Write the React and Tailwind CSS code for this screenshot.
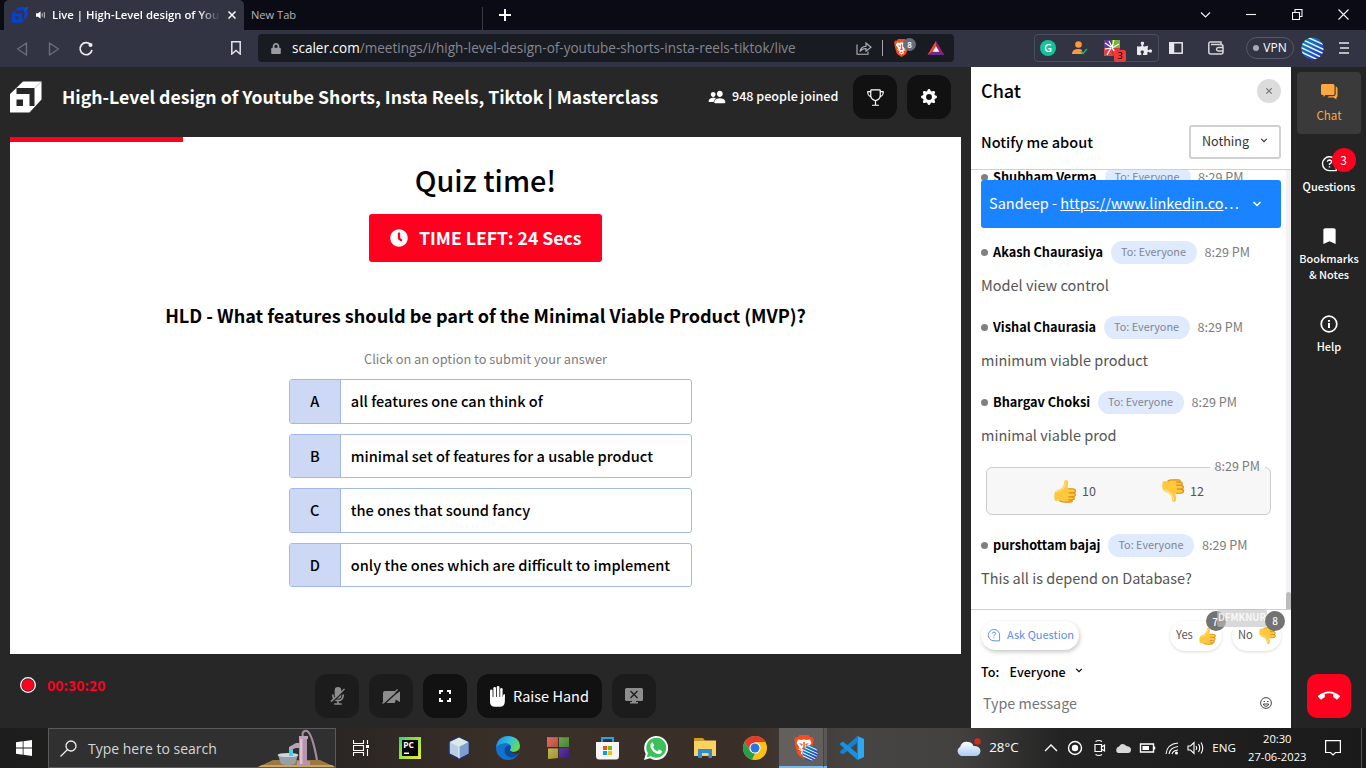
import React from "react";
import { IoPeople, IoTrophyOutline } from "react-icons/io5";
import { BsGearFill } from "react-icons/bs";
import { FaClock, FaPuzzlePiece, FaLock } from "react-icons/fa";
import { MdCallEnd, MdBookmark } from "react-icons/md";

const UI = "font-['Open_Sans','Noto_Sans',sans-serif]";

function ScalerMark({ className }) {
  return (
    <svg viewBox="0 0 32 32" className={className} fill="currentColor">
      <path fillRule="evenodd" d="M0 13L13 .5H31.5V18.500L19.500 31.500H0ZM6.500 13V7H24.500V25H19.500V13ZM6.500 18.500V25H13V18.500Z" />
      <path d="M31.500 .5L24.500 7" stroke="#999" strokeWidth=".6" />
    </svg>
  );
}

function BraveLion({ className }) {
  return (
    <svg viewBox="0 0 20 24" className={className}>
      <path d="M5.500 0H14.500L16.500 2.300L18.500 2L20 5L19 8L19.300 9L16.800 18Q16.300 19.500 15 20.500L10 24L5 20.500Q3.700 19.500 3.200 18L.7 9L1 8L0 5L1.500 2L3.500 2.300Z" fill="#fb4a1c" />
      <path d="M4 4.500L7.500 5L10 4.300L12.500 5L16 4.500L17.500 8L14.800 12L15.500 14.500L12.300 16.200L13.500 18.500L10 20.700L6.500 18.500L7.700 16.200L4.500 14.500L5.200 12L2.500 8Z" fill="#fff" />
      <path d="M5 8L8.500 9L8 11ZM15 8L11.500 9L12 11ZM9.300 7H10.700V12L12 14L10 15L8 14L9.300 12ZM5.500 12.500L8 15.500L5.500 14ZM14.500 12.500L12 15.500L14.500 14ZM8.300 18L10 16.500L11.700 18L10 19Z" fill="#fb4a1c" />
    </svg>
  );
}

function Thumb({ className }) {
  return (
    <svg viewBox="0 0 24 26" className={className}>
      <path d="M1 14Q3 11.500 7 11Q11 8 11 4Q11 1 13 1.200Q16 1.500 15.300 6L14.500 10.500H20Q23.500 10.700 23.500 13Q23.500 14.300 22.600 14.800Q24 16.200 23 18.200Q22.700 19 22 19.300Q22.800 21 21.600 22Q21.300 22.400 20.800 22.500Q21 25 18 25H12Q8 25 6 23.500H1Q-.5 18 1 14Z" fill="#ffc83d" />
      <path d="M15 10.500H20Q23.500 10.700 23.500 13Q23.500 14.800 21 15H16M21 15Q24 16.200 23 18.200Q22.400 19.400 20.500 19.400H15.500M20.500 19.400Q22.800 20.800 21.600 22Q21.200 22.600 19.500 22.600H15.500M19.500 22.600Q20.500 25 18 25H12Q8 25 6 23.500" fill="none" stroke="#d98e17" strokeWidth="1.200" />
      <path d="M2 14Q6 13.500 8.500 11.500Q12.500 8 12.500 3" fill="none" stroke="#ffe08a" strokeWidth="1.200" />
    </svg>
  );
}

function Chevron({ className }) {
  return (
    <svg viewBox="0 0 10 6" className={className} fill="none" stroke="currentColor" strokeWidth="1.500">
      <path d="M1.500 1L5 4.500L8.500 1" />
    </svg>
  );
}

function QuestionBubble({ className }) {
  return (
    <svg viewBox="0 0 18 18" className={className} fill="none" stroke="currentColor">
      <path d="M16.200 16.500V9A7.300 7.300 0 1 0 9 16.500Z" strokeLinejoin="round" />
      <path d="M6.800 7.200Q7 5.300 9 5.300Q11.200 5.400 11.200 7.200Q11.200 8.200 9 9.600V10.700M9 12V13.300" />
    </svg>
  );
}

function BraveAvatar({ className }) {
  return (
    <svg viewBox="0 0 24 24" className={className}>
      <defs>
        <linearGradient id="av" x1="0" y1="0" x2="1" y2="1"><stop offset="0" stopColor="#0a93b8" /><stop offset="1" stopColor="#2a2bc4" /></linearGradient>
        <clipPath id="avc"><circle cx="12" cy="12" r="11.500" /></clipPath>
      </defs>
      <circle cx="12" cy="12" r="11.500" fill="url(#av)" />
      <path clipPath="url(#avc)" d="M4 -1L26 9M1 2.500L26 14M-1 6L26 18.500M-2 10L24 22.500M-2 14.500L20 25" stroke="#e4f3f8" strokeWidth="1.600" />
    </svg>
  );
}

function BrowserChrome() {
  return (
    <div className={`${UI} text-white`}>
      <div className="flex h-[30px] bg-[#0b0b15]">
        <div className="ml-1 flex w-60 items-center rounded-t-[5px] bg-[#323443] pl-2">
          <ScalerMark className="h-4 w-4 shrink-0 text-[#0443d0]" />
          <svg viewBox="0 0 12 10" className="ml-2 h-[10px] w-[10px] shrink-0"><path d="M0 3H2.500L5.500 .5V9.500L2.500 7H0Z" fill="#fff" /><path d="M7.500 3V7M10 1.500V8.500" stroke="#ddd" fill="none" /></svg>
          <div className="ml-[6px] w-[168px] shrink-0 overflow-hidden whitespace-nowrap text-[11.300px] font-semibold leading-5 [mask-image:linear-gradient(to_right,black_87%,transparent)]">Live | High-Level design of You</div>
          <svg viewBox="0 0 8 8" className="ml-2 h-2 w-2 shrink-0" stroke="#fff" strokeWidth="1.500"><path d="M.5 .5L7.500 7.500M7.500 .5L.5 7.500" /></svg>
        </div>
        <div className="flex w-[238px] items-center pl-[7px] text-[11.100px] text-[#b8b8bd]">New Tab</div>
        <div className="mt-[7px] h-[23px] w-px bg-[#3a3a42]" />
        <div className="flex w-[43px] items-center justify-center"><svg viewBox="0 0 12 12" className="h-3 w-3" stroke="#fff" strokeWidth="2"><path d="M6 0V12M0 6H12" /></svg></div>
        <div className="ml-auto flex w-[184px]">
          {["M1 3.500L5.500 8L10 3.500", "M0 5.500H10", "M.5 3.500H7.500V10.500H.5ZM3 3.500V.5H10V7.500H7.500", "M.5 .5L10.500 10.500M10.500 .5L.5 10.500"].map((d) => (
            <div key={d} className="flex w-[46px] items-center justify-center pb-[2px]"><svg viewBox="0 0 11 11" className="h-[11px] w-[11px]" fill="none" stroke="#f4f4f4" strokeWidth="1.100"><path d={d} /></svg></div>
          ))}
        </div>
      </div>
      <div className="flex h-[37px] items-center bg-[#323443] pb-[1px]">
        <svg viewBox="0 0 110 20" className="h-5 w-[110px]" fill="none" strokeLinejoin="round">
          <path d="M26.500 5V17L17.500 11ZM49.500 5V17L58.500 11Z" stroke="#6b6d7b" strokeWidth="1.400" />
          <path d="M91 7.200A6 6 0 1 0 92 12" stroke="#eee" strokeWidth="1.700" /><circle cx="90.500" cy="7" r="2" fill="#eee" />
        </svg>
        <div className="flex w-[148px] justify-end pr-[17px]"><svg viewBox="0 0 10 14" className="h-[14px] w-[10px]" fill="none" stroke="#e4e4e8" strokeWidth="1.500"><path d="M.8 .8H9.200V13L5 9.500L.8 13Z" /></svg></div>
        <div className="flex h-7 w-[696px] items-center rounded-[4px] bg-[#191b22] pl-[13px]">
          <FaLock className="h-[11px] w-[10px] text-[#9a9ba3]" />
          <div className="ml-[11px] w-[560px] whitespace-nowrap text-[13.540px] leading-5 text-[#85878f]"><span className="text-white">scaler.com</span>/meetings/i/high-level-design-of-youtube-shorts-insta-reels-tiktok/live</div>
          <svg viewBox="0 0 16 14" className="ml-1 h-[14px] w-4 shrink-0" fill="none" stroke="#b5b6bb" strokeWidth="1.100"><path d="M1 3.500V13.300H12V10.500M4 10.500Q5 5.500 10 5.200V2L15 6.300L10 10.200V7.500Q6 7.500 4 10.500Z" /></svg>
          <div className="ml-[10px] h-4 w-px bg-[#a9aab0]" />
          <div className="relative ml-[11px] h-[18px] w-[17px] shrink-0">
            <BraveLion className="h-[18px] w-[15px]" />
            <div className="absolute left-[9px] top-[-1px] flex h-[13px] w-[13px] items-center justify-center rounded-full bg-[#6a6c7a] text-[8px] font-semibold">8</div>
          </div>
          <svg viewBox="0 0 18 16" className="ml-[16px] h-[15px] w-[18px] shrink-0"><path d="M9 0L0 15H18Z" fill="#9e1f63" /><path d="M9 0L0 15L6 11L9 5.500Z" fill="#ff4724" /><path d="M0 15H18L12.500 11H6Z" fill="#662d91" /><path d="M9 5.500L5.500 11.500H12.500Z" fill="#fff" /></svg>
        </div>
        <div className="ml-20 flex h-7 w-[125px] items-center rounded-[4px] border border-[#4a4c5c]">
          <div className="ml-[5px] flex h-4 w-4 items-center justify-center rounded-full bg-[#15c39a] text-[11px] font-semibold">G</div>
          <svg viewBox="0 0 16 14" className="ml-4 h-[14px] w-4"><circle cx="6.500" cy="3.500" r="3.300" fill="#ff9a3c" /><path d="M0 13Q0 8 6.500 8Q9 8 10 9L10 13Z" fill="#ff9a3c" /><path d="M9 10L11 12.500L15 8" stroke="#2aa85a" strokeWidth="1.600" fill="none" /></svg>
          <div className="relative ml-4 h-4 w-4">
            <svg viewBox="0 0 16 16" className="h-4 w-4"><path d="M0 0H8V8H0Z" fill="#5e3c99" /><path d="M8 0H16V8H8Z" fill="#74b531" /><path d="M0 8H8V16H0Z" fill="#e04545" /><path d="M8 8H16V16H8Z" fill="#dd3333" /><path d="M1 3L7 7M5 1L8 7M10 0L8 8M15 4L8 8M3 15L7 8M1 9L7 8M8 8L13 14" stroke="#fff" strokeWidth="1.200" /></svg>
            <div className="absolute left-[10px] top-[10px] flex h-3 w-3 items-center justify-center rounded-[2px] bg-[#ee3a3a] text-[9px] text-black">3</div>
          </div>
          <FaPuzzlePiece className="ml-[17px] h-[15px] w-[15px] text-[#ececf0]" />
        </div>
        <svg viewBox="0 0 14 12" className="ml-[10px] h-3 w-[14px]" fill="none" stroke="#e8e8ea" strokeWidth="1.500"><rect x=".8" y=".8" width="12.400" height="10.400" /><path d="M1 1H4.500V11H1Z" fill="#e8e8ea" /></svg>
        <svg viewBox="0 0 16 14" className="ml-[25px] h-[14px] w-4" fill="none" stroke="#d6d6da" strokeWidth="1.500"><path d="M13 3.500V1H2Q.8 1 .8 3V11Q.8 13 3 13H13Q15 13 15 11V6Q15 3.600 13 3.600H3M15 6.500H10.500Q8.500 6.700 8.500 8.200T10.500 10H15" /></svg>
        <div className="ml-[22px] flex h-[22px] w-12 items-center justify-center gap-[4px] rounded-full border border-[#55576a] text-[12px]"><span className="h-[6px] w-[6px] rounded-full bg-[#a8a9b8]" />VPN</div>
        <BraveAvatar className="ml-[7px] h-[23px] w-[23px]" />
        <svg viewBox="0 0 10 12" className="ml-[15px] h-3 w-[10px]" stroke="#e8e8ea" strokeWidth="1.700"><path d="M0 1H10M1 6H10M0 11H10" /></svg>
      </div>
    </div>
  );
}

const options = [
  ["A", "all features one can think of"],
  ["B", "minimal set of features for a usable product"],
  ["C", "the ones that sound fancy"],
  ["D", "only the ones which are difficult to implement"],
];

function Quiz() {
  return (
    <section className="ml-[10px] flex h-[517px] w-[951px] flex-col items-center bg-white text-black">
      <div className="h-[5px] w-[173px] self-start bg-[#ff001f]" />
      <h2 className="mt-[18px] h-10 text-[28.800px] font-medium leading-10">Quiz time!</h2>
      <div className="mt-[14px] flex h-12 w-[233px] items-center rounded-[3px] bg-[#ff001f] pl-[21px] text-white">
        <FaClock className="h-[18px] w-[18px]" />
        <span className="ml-[11px] text-[17.650px] font-bold leading-6">TIME LEFT: 24 Secs</span>
      </div>
      <h3 className="mt-[41px] h-6 whitespace-nowrap text-[18.100px] font-bold leading-6">HLD - What features should be part of the Minimal Viable Product (MVP)?</h3>
      <p className="mt-[22px] h-5 text-[12.770px] leading-5 text-[#7d7d7d]">Click on an option to submit your answer</p>
      <ul className="ml-[10px] mt-[10px] flex w-[403px] flex-col gap-[10px]">
        {options.map(([k, t]) => (
          <li key={k} className="flex h-[44.500px] overflow-hidden rounded-[3px] border border-[#a3b8ea] text-[14.590px] font-medium">
            <div className="flex w-[50.500px] items-center justify-center border-r border-[#a3b8ea] bg-[#cdd9f4]">{k}</div>
            <div className="flex items-center whitespace-nowrap pl-[10.300px]">{t}</div>
          </li>
        ))}
      </ul>
    </section>
  );
}

function Meeting() {
  const btn = "flex h-11 items-center justify-center rounded-xl";
  return (
    <main className="flex w-[971px] flex-col bg-[#272727]">
      <header className="flex h-[70px] items-center pb-[10px] pl-[10px]">
        <ScalerMark className="h-8 w-8 text-white" />
        <h1 className="ml-5 w-[636px] whitespace-nowrap pb-[1px] text-[17.660px] font-bold leading-6">High-Level design of Youtube Shorts, Insta Reels, Tiktok | Masterclass</h1>
        <IoPeople className="ml-[10px] h-[18px] w-[18px]" />
        <span className="ml-[6px] w-[106px] whitespace-nowrap pb-[3px] text-[12.550px] font-medium leading-5">948 people joined</span>
        <div className={`${btn} ml-[15px] w-11 bg-[#111]`}><IoTrophyOutline className="h-[19px] w-[19px] stroke-white [stroke-width:16]" /></div>
        <div className={`${btn} ml-[10px] w-11 bg-[#111]`}><BsGearFill className="h-4 w-4" /></div>
      </header>
      <Quiz />
      <footer className="flex h-[74px] pt-5">
        <div className="flex w-[315px] pl-5 pt-[3px]">
          <svg viewBox="0 0 16 16" className="h-4 w-4"><circle cx="8" cy="8" r="7.300" fill="none" stroke="#fff" strokeWidth="1.300" /><circle cx="8" cy="8" r="6" fill="#ff001f" /></svg>
          <span className="ml-[11px] mt-[-2px] text-[13.960px] font-bold leading-5 text-[#ff001f]">00:30:20</span>
        </div>
        <div className="flex gap-[10px]">
          <div className={`${btn} w-11 bg-[#1c1c1c]`}>
            <svg viewBox="0 0 16 19" className="h-[18px] w-[15px]" fill="none" stroke="#8d8d8d"><rect x="5" y="0" width="7" height="12.500" rx="3.500" fill="#8d8d8d" stroke="none" /><path d="M3 8V9Q3.500 14.500 8.500 14.500T14 9V8M8.500 14V17.500M4.500 18H12.500" strokeWidth="1.800" /><path d="M2.500 16L16 3.500" stroke="#1c1c1c" strokeWidth="1.500" /><path d="M1 15.500L15.500 2" strokeWidth="1.500" /></svg>
          </div>
          <div className={`${btn} w-11 bg-[#1c1c1c]`}>
            <svg viewBox="0 0 19 15" className="h-[15px] w-[19px]"><path d="M1 4Q1 2 3 2H12Q13.500 2 13.500 4V5L18 2.500V13L13.500 10.500V12Q13.500 14 12 14H3Q1 14 1 12Z" fill="#8d8d8d" /><path d="M1.500 15.500L16.500 2" stroke="#1c1c1c" strokeWidth="1.500" /><path d="M.5 14.500L15.500 .5" stroke="#8d8d8d" strokeWidth="1.300" /></svg>
          </div>
          <div className={`${btn} w-11 bg-[#111]`}>
            <svg viewBox="0 0 12 12" className="h-3 w-3" fill="none" stroke="#fff" strokeWidth="2"><path d="M1 4V1H4M8 1H11V4M11 8V11H8M4 11H1V8" /></svg>
          </div>
          <div className={`${btn} w-[125px] gap-2 bg-[#111]`}>
            <svg viewBox="0 0 15 21" className="h-[21px] w-[15px]" fill="#fff"><rect x="0" y="3.500" width="2.600" height="13" rx="1.200" /><rect x="3.400" y="1" width="2.600" height="13" rx="1.200" /><rect x="6.800" y="0" width="2.600" height="13" rx="1.200" /><rect x="10.200" y="2" width="2.400" height="13" rx="1.200" /><path d="M0 11H12.600L13.500 8.500Q14.600 7.500 15 9L14.800 16Q14.500 20.800 10 20.800H5Q0 20.500 0 16Z" /></svg>
            <span className="pb-px text-[14.500px] leading-5">Raise Hand</span>
          </div>
          <div className={`${btn} w-11 bg-[#1c1c1c]`}>
            <svg viewBox="0 0 18 16" className="h-4 w-[18px]"><rect y="0" width="18" height="13" rx="1.500" fill="#8d8d8d" /><path d="M7 12H11V14H13V15.500H5V14H7Z" fill="#8d8d8d" /><path d="M5.500 3L12.500 10M12.500 3L5.500 10" stroke="#1c1c1c" strokeWidth="1.300" /></svg>
          </div>
        </div>
      </footer>
    </main>
  );
}

function ChatHead({ name }) {
  return (
    <div className="flex h-[23px] items-center">
      <span className="h-[7px] w-[7px] rounded-full bg-[#808080]" />
      <span className="ml-[5px] pb-[2px] text-[12.720px] font-bold leading-5 text-black">{name}</span>
      <span className="ml-2 flex h-[22.500px] w-[86px] items-center justify-center rounded-full bg-[#dfeaff] pb-[2px] pr-px text-[10.860px] text-[#7f858f]">To: Everyone</span>
      <span className="ml-[7.500px] pb-px text-[12.600px] leading-5 text-[#7c7c7c]">8:29 PM</span>
    </div>
  );
}

function Message({ name, text }) {
  return (
    <div className="h-[75px]">
      <ChatHead name={name} />
      <p className="mt-[9px] text-[14.500px] leading-6 text-[#555]">{text}</p>
    </div>
  );
}

function Chat() {
  return (
    <aside className="flex w-80 flex-col bg-white text-black">
      <div className="flex h-[102px] flex-col px-[10px]">
        <div className="flex h-12 items-center justify-between">
          <h2 className="pb-[2px] text-[18px] font-medium leading-6">Chat</h2>
          <div className="flex h-6 w-6 items-center justify-center rounded-full bg-[#dcdcdc]"><svg viewBox="0 0 6 6" className="h-[6px] w-[6px]" stroke="#777" strokeWidth="1.200"><path d="M.3 .3L5.700 5.700M5.700 .3L.3 5.700" /></svg></div>
        </div>
        <div className="mt-[10px] flex h-[34px] items-center justify-between">
          <span className="text-[14.560px] font-medium leading-5">Notify me about</span>
          <div className="flex h-[34px] w-[92px] items-center justify-between rounded-[3px] border-2 border-[#d0d0d0] pl-[11px] pr-[11px] text-[#333]"><span className="pb-[3px] text-[12.560px] leading-5">Nothing</span><Chevron className="mb-[4px] h-[5px] w-2" /></div>
        </div>
      </div>
      <div className="relative flex h-[440px] overflow-hidden border-t border-[#d0d0d0]">
        <div className="mt-[-4px] w-[315px] pl-[10px]">
          <div className="h-[75px]"><ChatHead name="Shubham Verma" /></div>
          <Message name="Akash Chaurasiya" text="Model view control" />
          <Message name="Vishal Chaurasia" text="minimum viable product" />
          <Message name="Bhargav Choksi" text="minimal viable prod" />
          <fieldset className="ml-[5px] mt-[-9px] h-[58px] w-[285px] rounded-[6px] border border-[#ccc] bg-[#f7f7f7]">
            <legend className="ml-auto mr-[5px] h-5 px-[5px] text-[12.600px] leading-[18px] text-[#7c7c7c]">8:29 PM</legend>
            <div className="flex pl-[66px] pt-[2px] text-[12.500px] leading-5 text-[#555]">
              <div className="flex w-[108px]"><Thumb className="h-6 w-6" /><span className="ml-[5px] mt-[2px]">10</span></div>
              <div className="flex"><Thumb className="h-6 w-6 -scale-y-100" /><span className="ml-[5px] mt-[2px]">12</span></div>
            </div>
          </fieldset>
          <div className="mt-[19px]"><Message name="purshottam bajaj" text="This all is depend on Database?" /></div>
        </div>
        <div className="flex w-[5px] flex-col justify-end bg-[#f3f3f6]"><div className="h-[17px] rounded-t-[3px] bg-[#bcbcbc]" /></div>
        <div className="absolute left-[10px] top-[10px] flex h-12 w-[300px] items-center rounded-[3px] bg-[#1a83ff] pl-2 text-white">
          <div className="w-[252px] truncate pb-[2px] text-[14.530px] leading-6">Sandeep - <span className="underline">https://www.linkedin.co</span>…</div>
          <Chevron className="ml-[11px] h-[6px] w-[10px]" />
        </div>
      </div>
      <div className="flex h-[119px] flex-col border-t border-[#d0d0d0] px-[10px]">
        <div className="relative mt-[11px] flex h-[30px]">
          <div className="flex h-[29px] w-[98px] items-center rounded-full pb-px pl-[6px] text-[#5a8cf5] shadow-[1px_2px_4px_rgba(0,0,0,0.22)]"><QuestionBubble className="h-[14px] w-[14px] [stroke-width:1.200]" /><span className="ml-[6px] pb-[2px] text-[11px]">Ask Question</span></div>
          <div className="ml-[91px] flex h-[30px] w-[52px] items-center rounded-full pb-px pl-[6px] text-[11.200px] text-[#555] shadow-[0_1px_3px_rgba(0,0,0,0.15)]"><span className="pb-[2px]">Yes</span><Thumb className="ml-[6px] h-[18px] w-[17px]" /></div>
          <div className="ml-[10px] flex h-[30px] w-[49px] items-center rounded-full pb-px pl-[6px] text-[11.200px] text-[#555] shadow-[0_1px_3px_rgba(0,0,0,0.15)]"><span className="pb-[2px]">No</span><Thumb className="ml-[6px] h-[18px] w-[17px] -scale-y-100" /></div>
          <div className="absolute left-[225px] top-[-10px] flex h-5 w-5 items-center justify-center rounded-full bg-[#737373] pr-[2px] text-[10px] font-medium text-white">7</div>
          <div className="absolute left-[236px] top-[-12px] flex h-[18px] w-[50px] items-center justify-center rounded-[3px] bg-[#c0c0c0]/60 pb-px text-[9.600px] font-bold text-white/80">DFMKNUR</div>
          <div className="absolute left-[284px] top-[-10px] flex h-5 w-5 items-center justify-center rounded-full bg-[#737373] pb-px text-[10px] font-medium text-white">8</div>
        </div>
        <div className="mt-[11px] flex h-5 items-center text-[12.550px] font-medium leading-5"><span className="w-[28.500px]">To:</span><span>Everyone</span><Chevron className="mb-1 ml-[9px] h-[5px] w-2" /></div>
        <div className="mt-[10px] flex h-6 items-center pl-[2px] text-[14.320px] text-[#757575]"><span className="w-[277px] pb-[2px]">Type message</span>
          <svg viewBox="0 0 12 12" className="mb-[2px] h-3 w-3" fill="none" stroke="#444" strokeWidth="1"><circle cx="6" cy="6" r="5.400" /><path d="M3.300 7H8.700Q8.200 9.300 6 9.300T3.300 7ZM3.500 4.500H5M7 4.500H8.500" /></svg>
        </div>
      </div>
    </aside>
  );
}

function Rail() {
  return (
    <nav className="flex w-[75px] flex-col items-center bg-[#242424] pl-px pt-[5px] text-[11px] font-medium leading-4 text-white">
      <div className="flex h-[62px] w-16 flex-col items-center rounded-[4px] bg-[#3a3a3a] pt-[12px] text-[#ffa73f]">
        <svg viewBox="0 0 17 16" className="h-4 w-[17px]" fill="currentColor"><path d="M1.500 0H12Q13.500 0 13.500 1.500V9.500Q13.500 11 12 11H4.500L2.500 13V11H1.500Q0 11 0 9.500V1.500Q0 0 1.500 0Z" /><path d="M14.700 2.500Q16.500 3 16.500 4.500V12Q16.500 13 15.500 13.300V15.500L12.500 13.500H6.500L7.800 12.200H12.500Q14.700 12 14.700 10Z" /></svg>
        <span className="mt-[7px] text-[11.600px] font-normal">Chat</span>
      </div>
      <div className="relative mt-[21px] flex h-[39px] flex-col items-center">
        <QuestionBubble className="h-[17px] w-[17px] [stroke-width:1.500]" /><span className="mt-[6px]">Questions</span>
        <div className="absolute left-[29px] top-[-7px] flex h-6 w-6 items-center justify-center rounded-full bg-[#ff001f] pb-px text-[12px] font-normal">3</div>
      </div>
      <MdBookmark className="mt-[31px] h-[22px] w-[21px]" />
      <span className="mt-[3px] text-center text-[10.900px]">Bookmarks<br />&amp; Notes</span>
      <svg viewBox="0 0 18 18" className="mt-[33px] h-[18px] w-[18px]" fill="none" stroke="#fff" strokeWidth="1.700"><circle cx="9" cy="9" r="7.800" /><path d="M9 8V13M9 5V6.700" strokeWidth="2" /></svg>
      <span className="mt-[5px]">Help</span>
      <div className="mb-[10px] mt-auto flex h-11 w-11 items-center justify-center rounded-[10px] bg-[#ff001f]"><MdCallEnd className="h-[22px] w-[22px]" /></div>
    </nav>
  );
}

function Pump() {
  return (
    <svg viewBox="0 0 78 38" className="h-[38px] w-[78px] shrink-0">
      <path d="M0 38L15 31H62L77 38Z" fill="#9b7840" /><path d="M0 38L4 36H74L77 38Z" fill="#c9a468" />
      <path d="M45 9Q43 1 49 2Q54 4 59 31" stroke="#a58ba0" strokeWidth="2.200" fill="none" />
      <path d="M41 8H49V32H52V36Q45 38 39 36V32H41Z" fill="#b794ac" /><path d="M42 8H44.500V35H42Z" fill="#dcc1d3" />
      <path d="M42 14H38L31 18V20H35L38 19H42ZM41 7H50V10H41Z" fill="#c0a0b6" />
      <path d="M20 26H40L37 35Q30 37 23 35Z" fill="#98a0a5" /><ellipse cx="30" cy="26" rx="10.500" ry="2" fill="#cdd8dd" /><path d="M33 20V27" stroke="#43d0ee" strokeWidth="4" />
    </svg>
  );
}

const apps = [
  <svg viewBox="0 0 16 16" className="h-4 w-4" fill="none" stroke="#fff" strokeWidth="1.100"><path d="M0 3.500H11M0 12.500H11M.5 0V3.500M10.500 0V3.500M.5 12.500V16M10.500 12.500V16M.5 5.500H10.500V10.500H.5ZM14.500 0V4M14.500 9V16" /><path d="M13 5H16V8H13Z" fill="#fff" stroke="none" /></svg>,
  <svg viewBox="0 0 22 22" className="h-[22px] w-[22px]"><defs><linearGradient id="pc" x1="0" y1="0" x2="1" y2="1"><stop offset="0" stopColor="#21d789" /><stop offset=".35" stopColor="#7fe03a" /><stop offset="1" stopColor="#f5ea3c" /></linearGradient></defs><path d="M0 0H22V22H0Z" fill="url(#pc)" /><path d="M3 3H19V19H3Z" fill="#050505" /><path d="M5 15.500H10V17H5Z" fill="#fff" /><text x="4.200" y="11" fontSize="8.500" fontWeight="700" fill="#fff">PC</text></svg>,
  <svg viewBox="0 0 22 24" className="h-6 w-[22px]"><path d="M11 1L21 6V18L11 23L1 18V6Z" fill="#b9cde6" stroke="#23305e" strokeWidth="1.500" /><path d="M11 1.500L20.500 6L11 11L1.500 6Z" fill="#dce9ea" /><path d="M11 11L20.500 6V17.500L11 22.500Z" fill="#7d9fd0" /><path d="M11 11V22.500" stroke="#eef4fc" /></svg>,
  <svg viewBox="0 0 24 24" className="h-6 w-6"><defs><linearGradient id="ed" x1="0" y1="0" x2="1" y2=".4"><stop offset="0" stopColor="#1a8be0" /><stop offset=".6" stopColor="#34c1d8" /><stop offset="1" stopColor="#62dc58" /></linearGradient></defs><circle cx="12" cy="12" r="12" fill="#1273cf" /><path d="M0 11Q2 0 12.500 0Q23.500 1 24 10Q23.500 16 17 16Q13.500 15.500 14 13.500Q15.500 12 14.500 9.500Q12 6 7 7.500Q2 8.500 0 11Z" fill="url(#ed)" /><path d="M14 9.200Q9 9.500 8.500 14Q8.500 20 15 21.500Q19 21.500 22 18Q24 15 20 16.200Q17 17 15 15.800Q13 14.500 14.500 12.500Q15 10.500 14 9.200Z" fill="#0c4a9b" /><path d="M24 12Q22 16 17 16Q14 15.500 13.800 14Q16 19 23 17Z" fill="#33302c" /></svg>,
  <svg viewBox="0 0 22 24" className="h-6 w-[22px]"><defs><linearGradient id="sh" x1="0" y1="0" x2="1" y2="1"><stop offset="0" stopColor="#fff" stopOpacity=".3" /><stop offset="1" stopColor="#000" stopOpacity=".3" /></linearGradient></defs><path d="M0 1Q5 2 11 1V11H0Z" fill="#cf3424" /><path d="M12 1Q17 2 22 1V11H12Z" fill="#4c9e24" /><path d="M1 12.500H11V22L1 23Z" fill="#c7b62c" /><path d="M12 12.500L22 11.500V21L12 22Z" fill="#5221ae" /><path d="M0 1H11V11H0ZM12 1H22V11H12ZM1 12.500H11V22L1 23ZM12 12.500L22 11.500V21L12 22Z" fill="url(#sh)" /></svg>,
  <svg viewBox="0 0 24 24" className="h-6 w-6"><path d="M7 7V2H18V7" fill="none" stroke="#1ca6ee" strokeWidth="2" /><path d="M1 6H24V20Q24 23.500 21 23.500H4Q1 23.500 1 20Z" fill="#f5f5f5" /><path d="M8 10H12V14H8Z" fill="#f25022" /><path d="M13 10H17V14H13Z" fill="#7fba00" /><path d="M8 15H12V19H8Z" fill="#00a4ef" /><path d="M13 15H17V19H13Z" fill="#ffb900" /></svg>,
  <svg viewBox="0 0 24 24" className="h-6 w-6"><path d="M0 24L1.700 17.900A12 12 0 1 1 6 22.300Z" fill="#fff" /><path d="M2.700 21.300L3.900 17.200A10 10 0 1 1 7 20.200Z" fill="#3cc15a" /><path d="M8.500 6.300L10.200 9.500L9 11.200Q10.500 14 13.500 15.200L15 13.500L18 15Q18 18 15 18Q9 17.500 6.500 11Q6 7.500 8.500 6.300Z" fill="#fff" /></svg>,
  <svg viewBox="0 0 22 20" className="h-5 w-[22px]"><path d="M0 0H9L11 2.500H0Z" fill="#d99815" /><path d="M0 2.500H22V18H0Z" fill="#fbd25c" /><path d="M4 20V11H18V20H14.500V15H8V20Z" fill="#2f8bd9" /></svg>,
  <svg viewBox="0 0 24 24" className="h-6 w-6"><circle cx="12" cy="12" r="12" fill="#fbc116" /><path d="M1.600 6A12 12 0 0 1 22.400 6H12Z" fill="#e33b2e" /><path d="M1.600 6H12V12L6.500 14Z" fill="#e33b2e" /><path d="M1.600 6L7 15L12 17.500L9 23.600A12 12 0 0 1 1.600 6Z" fill="#22a04c" /><circle cx="12" cy="12" r="5.600" fill="#fff" /><circle cx="12" cy="12" r="4.500" fill="#2a74e8" /></svg>,
];

function Taskbar() {
  return (
    <div className={`${UI} flex h-10 items-center bg-[linear-gradient(to_right,#1d1d1d_0,#2a2523_330px,#3b3029_520px,#3a2f28_740px,#474543_860px,#42413f_960px,#232323_1060px,#1a1a1a_1366px)] text-white`}>
      <div className="flex w-12 justify-center"><svg viewBox="0 0 16 16" className="h-4 w-4" fill="#fff"><path d="M0 2.200L6.700 1.300V7.600H0ZM7.500 1.200L16 0V7.600H7.500ZM0 8.400H6.700V14.700L0 13.800ZM7.500 8.400H16V16L7.500 14.800Z" /></svg></div>
      <div className="flex h-10 w-72 items-center overflow-hidden border border-[#5b5b5b] bg-[#303030] pl-[11px]">
        <svg viewBox="0 0 17 17" className="h-[17px] w-[17px] shrink-0" fill="none" stroke="#eee" strokeWidth="1.300"><circle cx="11" cy="6" r="5" /><path d="M7.500 9.500L.5 16.500" /></svg>
        <span className="ml-[11px] w-[170px] shrink-0 text-[14px] text-[#d6d6d6]">Type here to search</span>
        <Pump />
      </div>
      <div className="flex">
        {apps.map((a, i) => (<div key={i} className="flex w-[49.250px] items-center justify-center">{a}</div>))}
      </div>
      <div className="flex h-10 w-[44px] items-center justify-center border-b-2 border-[#76b9ed] bg-[#625f5d] pl-[5px]">
        <div className="relative"><BraveLion className="h-6 w-5" /><BraveAvatar className="absolute left-[8px] top-[10px] h-4 w-4" /></div>
      </div>
      <div className="h-10 w-1 border-b-2 border-l border-b-[#76b9ed] border-l-[#444] bg-[#5a5856]" />
      <svg viewBox="0 0 24 24" className="ml-[13px] h-6 w-6"><path d="M17.500 0L24 3V21L17.500 24Z" fill="#2da8f2" /><path d="M17.500 0V6.500L3 18.500L0 16.500V15.500Z" fill="#1482cc" /><path d="M17.500 24V17.500L3 5.500L0 7.500V8.500Z" fill="#1b90dc" /></svg>
      <svg viewBox="0 0 26 20" className="ml-[92px] h-5 w-[26px]"><defs><linearGradient id="cl" x1="0" y1="0" x2="0" y2="1"><stop offset="0" stopColor="#fff" /><stop offset="1" stopColor="#a9caf5" /></linearGradient></defs><path d="M5 18A5 5 0 0 1 4 9Q6 3 12 4Q16 4 17.500 8Q24 8 24.500 13Q24 18 19 18Z" fill="url(#cl)" /><circle cx="21.500" cy="3.500" r="3.200" fill="#d02c20" /></svg>
      <span className="ml-[7px] w-[30px] whitespace-nowrap text-[13.300px]">28°C</span>
      <svg viewBox="0 0 166 20" className="ml-[22px] h-5 w-[166px]" fill="none" stroke="#fff" strokeWidth="1.400">
        <path d="M4 13L10 7L16 13" />
        <circle cx="34" cy="10" r="6.500" /><circle cx="34" cy="10" r="3.200" fill="#fff" stroke="none" />
        <path d="M54 6.500H60.500V13.500H54ZM60.500 9L63.500 7V13L60.500 11M54.500 3.500Q58 1.500 61 3.500M54.500 16.500Q58 18.500 61 16.500" strokeWidth="1.200" />
        <path d="M77 15A3.500 3.500 0 0 1 78 8.500Q81 4 85.500 8Q90 8.500 90 11.500Q90 15 87 15Z" fill="#d8d8d8" stroke="none" />
        <path d="M99.500 6H112.500V14H99.500ZM113.500 8.500V11.500" /><path d="M101.500 8H108V12H101.500Z" fill="#fff" stroke="none" />
        <path d="M125 16Q126 6 137 5M128 16Q129 9.500 137 8.500M131 16Q132 12.500 137 12" strokeWidth="1.100" /><circle cx="135.500" cy="15" r="1.500" fill="#fff" stroke="none" />
        <path d="M147 8H149.500L153 4.500V15.500L149.500 12H147ZM155 8Q156.500 10 155 12M157.500 6Q160 10 157.500 14M160 4.500Q163.500 10 160 15.500" strokeWidth="1.100" />
      </svg>
      <span className="ml-[5px] w-6 text-[11.600px]">ENG</span>
      <div className="ml-[11px] w-[60px] text-center text-[11.200px] leading-[18px]">20:30<br />27-06-2023</div>
      <svg viewBox="0 0 16 16" className="ml-[18px] h-4 w-4" fill="none" stroke="#fff" strokeWidth="1.200"><path d="M.6 .6H15.400V12.500H10.500L8 15L5.500 12.500H.6Z" /></svg>
      <div className="ml-[20px] h-10 w-px bg-[#555]" />
    </div>
  );
}

export default function App() {
  return (
    <div className="flex h-[768px] w-[1366px] flex-col overflow-hidden bg-[#242424] font-['Noto_Sans_CJK_SC',sans-serif]">
      <BrowserChrome />
      <div className="flex h-[661px] text-white"><Meeting /><Chat /><Rail /></div>
      <Taskbar />
    </div>
  );
}
